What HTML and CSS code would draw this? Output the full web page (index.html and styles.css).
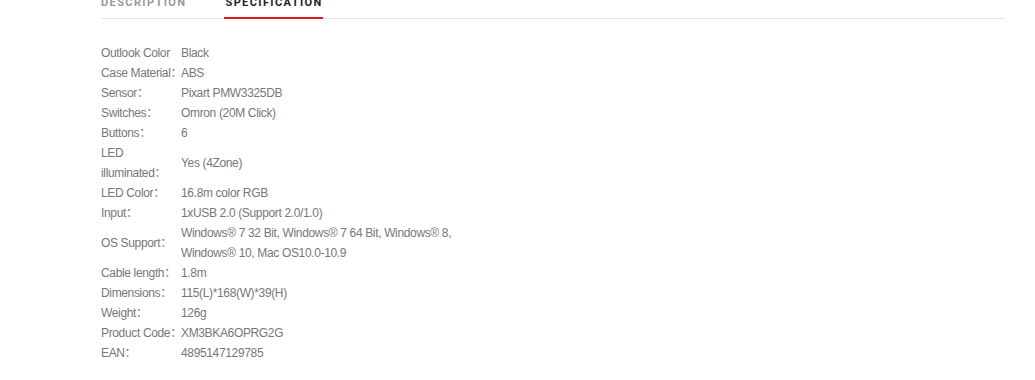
FILE: index.html
```html
<!DOCTYPE html>
<html>
<head>
<meta charset="utf-8">
<link rel="stylesheet" href="styles.css">
</head>
<body>
<div class="page">
  <div class="tabs">
    <div class="tab">DESCRIPTION</div>
    <div class="tab active">SPECIFICATION</div>
  </div>
  <div class="specs">
    <div class="label">Outlook Color</div><div class="value">Black</div>
    <div class="label">Case Material：</div><div class="value">ABS</div>
    <div class="label">Sensor：</div><div class="value">Pixart PMW3325DB</div>
    <div class="label">Switches：</div><div class="value">Omron (20M Click)</div>
    <div class="label">Buttons：</div><div class="value">6</div>
    <div class="label">LED<br>illuminated：</div><div class="value">Yes (4Zone)</div>
    <div class="label">LED Color：</div><div class="value">16.8m color RGB</div>
    <div class="label">Input：</div><div class="value">1xUSB 2.0 (Support 2.0/1.0)</div>
    <div class="label">OS Support：</div><div class="value">Windows® 7 32 Bit, Windows® 7 64 Bit, Windows® 8, Windows® 10, Mac OS10.0-10.9</div>
    <div class="label">Cable length：</div><div class="value">1.8m</div>
    <div class="label">Dimensions：</div><div class="value">115(L)*168(W)*39(H)</div>
    <div class="label">Weight：</div><div class="value">126g</div>
    <div class="label">Product Code：</div><div class="value">XM3BKA6OPRG2G</div>
    <div class="label">EAN：</div><div class="value">4895147129785</div>
  </div>
</div>
</body>
</html>
```
FILE: styles.css
```css
html, body {
  margin: 0;
  padding: 0;
  background: #fff;
}
.page {
  margin-left: 101px;
  width: 904px;
}
.tabs {
  display: flex;
  gap: 38px;
  margin-top: -7px;
  border-bottom: 1px solid #e5e5e5;
}
.tab {
  font-family: Roboto, "Liberation Sans", sans-serif;
  font-weight: 700;
  font-size: 11px;
  letter-spacing: 1.4px;
  line-height: 20px;
  padding-bottom: 5px;
  color: #999;
}
.tab.active {
  color: #222;
  border-bottom: 2px solid #e8141b;
  margin-bottom: -1px;
  padding-bottom: 4px;
  padding-left: 1px;
}
.specs {
  display: grid;
  grid-template-columns: 80px 300px;
  align-items: center;
  margin-top: 24px;
  font-family: "Liberation Sans", Arial, "Noto Sans CJK SC", sans-serif;
  font-size: 12px;
  letter-spacing: -0.35px;
  line-height: 20px;
  color: #777;
}
.label {
  white-space: nowrap;
}
```
